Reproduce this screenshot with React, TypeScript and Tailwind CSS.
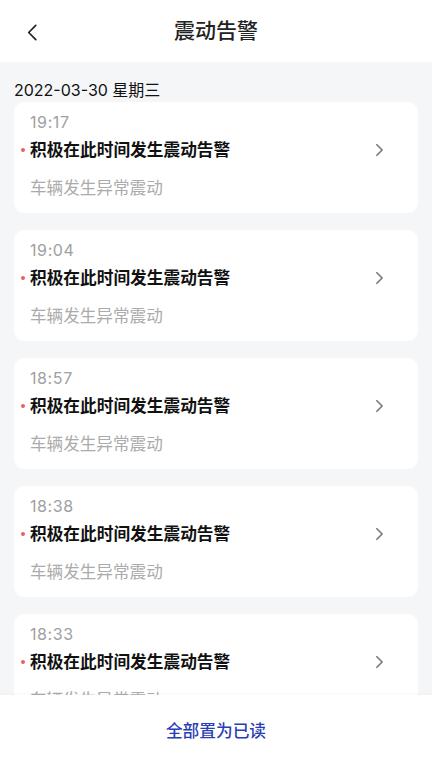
const alerts = [
  { time: '19:17' },
  { time: '19:04' },
  { time: '18:57' },
  { time: '18:38' },
  { time: '18:33' },
];

function Chevron({ className }: { className?: string }) {
  return (
    <svg viewBox="0 0 10 16" className={className} fill="none" stroke="currentColor" strokeWidth="2" strokeLinecap="round" strokeLinejoin="round">
      <path d="M2 2l6 6-6 6" />
    </svg>
  );
}

export default function App() {
  return (
    <div className="h-[768px] w-full flex flex-col bg-[#f5f6f8] overflow-hidden" style={{ fontFamily: 'Inter, "Noto Sans CJK SC", sans-serif' }}>
      {/* Header */}
      <div className="h-[62px] bg-white flex items-center relative shrink-0">
        <button className="absolute left-[26px] top-[24px] text-[#222]">
          <svg viewBox="0 0 12 18" className="w-[12px] h-[17px]" fill="none" stroke="currentColor" strokeWidth="1.8" strokeLinecap="round" strokeLinejoin="round">
            <path d="M10 1.5L2.5 9l7.5 7.5" />
          </svg>
        </button>
        <h1 className="flex-1 text-center text-[21px] leading-[28px] text-[#222] font-medium">震动告警</h1>
      </div>

      {/* List */}
      <div className="flex-1 overflow-hidden px-[14px]">
        <div className="pt-[18px] pb-[2px] text-[16px] leading-[20px] text-[#111]">2022-03-30 星期三</div>
        <div className="flex flex-col gap-[17px]">
          {alerts.map((a) => (
            <div key={a.time} className="h-[111px] shrink-0 bg-white rounded-[10px] pl-[16px] pr-[34px] pt-[9px]">
              <div className="text-[16px] leading-[22px] tracking-[0.6px] text-[#a0a0a0]">{a.time}</div>
              <div className="mt-[5px] flex items-center h-[24px]">
                <span className="w-[4px] h-[4px] rounded-full bg-[#e8605c] ml-[-9px] mr-[5px]" />
                <span className="text-[16.7px] leading-[24px] text-[#111] font-semibold">积极在此时间发生震动告警</span>
                <Chevron className="ml-auto w-[9px] h-[14px] text-[#7a7a7a]" />
              </div>
              <div className="mt-[14px] text-[16.6px] leading-[24px] text-[#ababab]">车辆发生异常震动</div>
            </div>
          ))}
        </div>
      </div>

      {/* Footer */}
      <div className="h-[73px] shrink-0 bg-white flex items-center justify-center shadow-[0_-1px_4px_rgba(0,0,0,0.03)] relative z-10">
        <button className="text-[16.7px] leading-[24px] text-[#2a3db5] font-medium mt-[-1px]">全部置为已读</button>
      </div>
    </div>
  );
}
